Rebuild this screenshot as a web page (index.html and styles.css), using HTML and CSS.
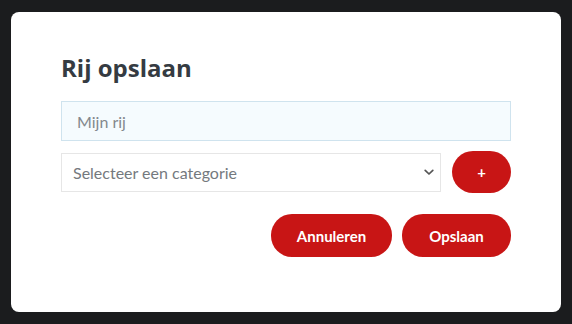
FILE: index.html
```html
<!DOCTYPE html>
<html lang="nl">
<head>
<meta charset="utf-8">
<link rel="stylesheet" href="styles.css">
</head>
<body>
<div class="dialog">
  <h1 class="title">Rij opslaan</h1>
  <input class="name-input" type="text" placeholder="Mijn rij">
  <div class="cat-row">
    <div class="select">
      <span class="select-text">Selecteer een categorie</span>
      <svg class="chev" width="10" height="7" viewBox="0 0 10 7"><path d="M1.2 1.3 L5 5 L8.8 1.3" fill="none" stroke="#555" stroke-width="1.7" stroke-linecap="round" stroke-linejoin="round"/></svg>
    </div>
    <button class="btn btn-plus">+</button>
  </div>
  <div class="actions">
    <button class="btn btn-cancel">Annuleren</button>
    <button class="btn btn-save">Opslaan</button>
  </div>
</div>
</body>
</html>
```
FILE: styles.css
```css
html, body {
  margin: 0;
  padding: 0;
  background: #1b1c1e;
  width: 572px;
  height: 324px;
  overflow: hidden;
}
body {
  padding: 12px 11px;
  box-sizing: border-box;
  font-family: Lato, "Open Sans", sans-serif;
}
.dialog {
  width: 550px;
  height: 300px;
  background: #fff;
  border-radius: 8px;
  box-sizing: border-box;
  padding: 40px 50px 0 50px;
  display: flex;
  flex-direction: column;
}
.title {
  margin: 0;
  font-family: "Open Sans", Lato, sans-serif;
  font-size: 24px;
  line-height: 32px;
  font-weight: 700;
  color: #353b42;
  height: 32px;
}
.name-input {
  margin-top: 17px;
  height: 40px;
  box-sizing: border-box;
  width: 100%;
  border: 1px solid #cfe3ee;
  background: #f5fbfe;
  padding: 0 15px;
  font-family: inherit;
  font-size: 16px;
  color: #495057;
  outline: none;
}
.name-input::placeholder {
  color: #83888d;
}
.cat-row {
  margin-top: 10px;
  display: flex;
  align-items: center;
  gap: 11px;
}
.select {
  flex: 1;
  height: 39px;
  box-sizing: border-box;
  border: 1px solid #e6e6e6;
  display: flex;
  align-items: center;
  justify-content: space-between;
  padding: 0 6px 0 11px;
  background: #fff;
}
.select-text {
  font-size: 16px;
  color: #74797e;
}
.chev {
  display: block;
}
.btn {
  border: none;
  background: #c81515;
  color: #fff;
  font-family: inherit;
  font-weight: 700;
  font-size: 15px;
  border-radius: 21px;
  padding: 0;
  cursor: pointer;
}
.btn-plus {
  width: 59px;
  height: 42px;
  font-size: 15px;
}
.actions {
  margin-top: 21px;
  display: flex;
  justify-content: flex-end;
  gap: 10px;
}
.btn-cancel {
  width: 121px;
  height: 43px;
}
.btn-save {
  width: 109px;
  height: 43px;
}
```
